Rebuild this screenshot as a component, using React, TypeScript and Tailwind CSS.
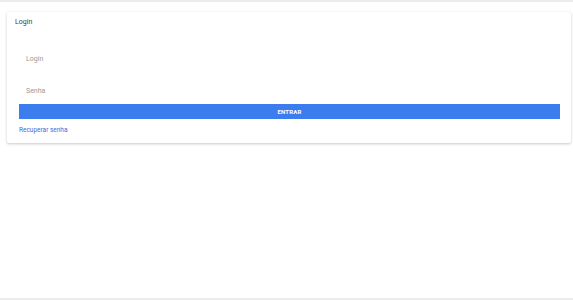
export default function App() {
    return (
        <div className="h-[300px] border-y-2 border-[#ececec] bg-white font-['Roboto',sans-serif]">
            {/* Card */}
            <div className="ml-[7px] mr-[2px] mt-[10px] flex flex-col rounded-[2px] bg-white pb-[7px] shadow-[0_1px_3px_rgba(0,0,0,0.22)]">
                <div className="pl-[8px] pt-[3px] text-[7px] leading-[14px] text-[#3c3c3c]">Login</div>
                <div className="flex flex-col px-[12px] pr-[11px]">
                    <div className="mt-[22px] pl-[7px] text-[7px] leading-[16px] text-[#9a9a9a]">Login</div>
                    <div className="mt-[16px] pl-[7px] text-[7px] leading-[16px] text-[#9a9a9a]">Senha</div>
                    <button className="mt-[5px] h-[15px] w-full bg-[#3b7cee] text-[6px] font-bold tracking-[0.2px] text-white">
                        ENTRAR
                    </button>
                    <a className="mt-[5px] text-[6.5px] leading-[12px] text-[#3272e0]">Recuperar senha</a>
                </div>
            </div>
        </div>
    );
}
